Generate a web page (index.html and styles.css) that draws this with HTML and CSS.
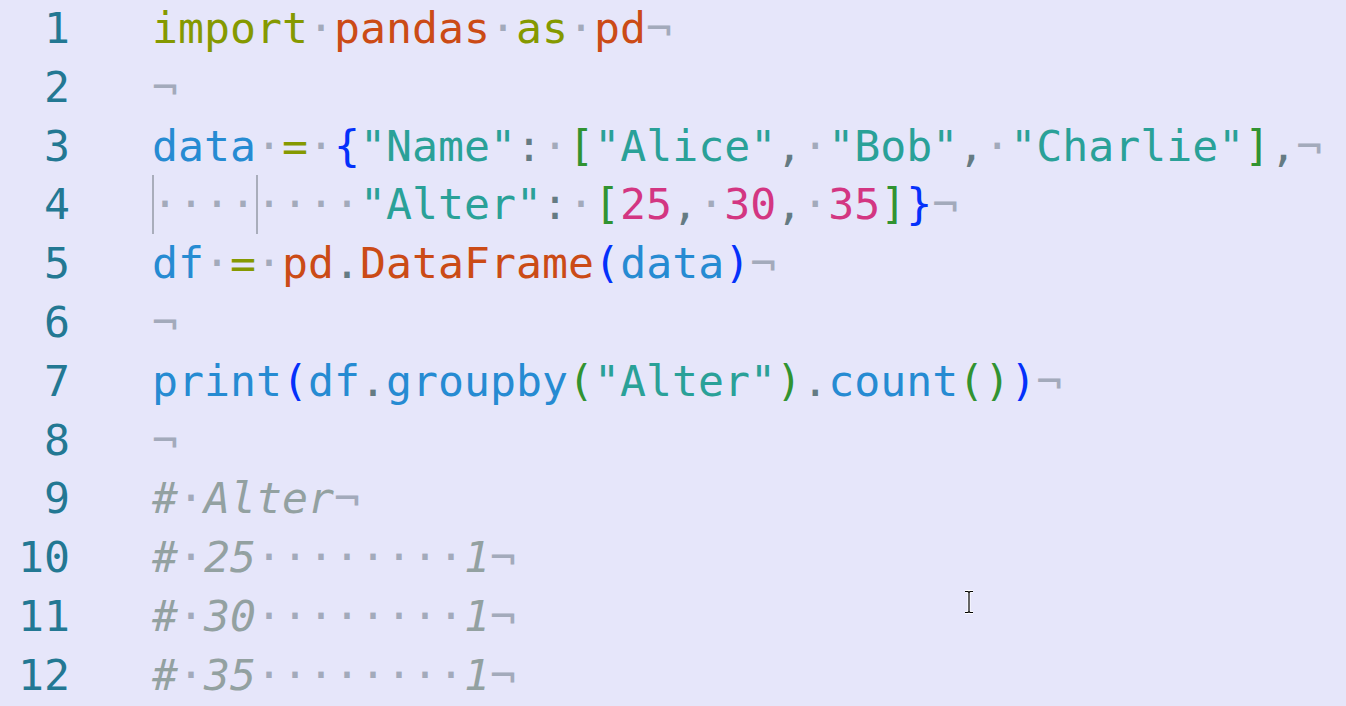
FILE: index.html
```html
<!DOCTYPE html>
<html>
<head>
<meta charset="utf-8">
<link rel="stylesheet" href="styles.css">
</head>
<body>
<div class="editor">
  <div class="row"><span class="ln">1</span><span class="code"><span class="kw">import</span><span class="ws">·</span><span class="mod">pandas</span><span class="ws">·</span><span class="kw">as</span><span class="ws">·</span><span class="mod">pd</span><span class="eol">¬</span></span></div>
  <div class="row"><span class="ln">2</span><span class="code"><span class="eol">¬</span></span></div>
  <div class="row"><span class="ln">3</span><span class="code"><span class="var">data</span><span class="ws">·</span><span class="kw">=</span><span class="ws">·</span><span class="b1">{</span><span class="str">"Name"</span><span class="pun">:</span><span class="ws">·</span><span class="b2">[</span><span class="str">"Alice"</span><span class="pun">,</span><span class="ws">·</span><span class="str">"Bob"</span><span class="pun">,</span><span class="ws">·</span><span class="str">"Charlie"</span><span class="b2">]</span><span class="pun">,</span><span class="eol">¬</span></span></div>
  <div class="row"><span class="ln">4</span><span class="code"><span class="ind ws">····</span><span class="ind ws">····</span><span class="str">"Alter"</span><span class="pun">:</span><span class="ws">·</span><span class="b2">[</span><span class="num">25</span><span class="pun">,</span><span class="ws">·</span><span class="num">30</span><span class="pun">,</span><span class="ws">·</span><span class="num">35</span><span class="b2">]</span><span class="b1">}</span><span class="eol">¬</span></span></div>
  <div class="row"><span class="ln">5</span><span class="code"><span class="var">df</span><span class="ws">·</span><span class="kw">=</span><span class="ws">·</span><span class="mod">pd</span><span class="pun">.</span><span class="mod">DataFrame</span><span class="b1">(</span><span class="var">data</span><span class="b1">)</span><span class="eol">¬</span></span></div>
  <div class="row"><span class="ln">6</span><span class="code"><span class="eol">¬</span></span></div>
  <div class="row"><span class="ln">7</span><span class="code"><span class="var">print</span><span class="b1">(</span><span class="var">df</span><span class="pun">.</span><span class="var">groupby</span><span class="b2">(</span><span class="str">"Alter"</span><span class="b2">)</span><span class="pun">.</span><span class="var">count</span><span class="b2">()</span><span class="b1">)</span><span class="eol">¬</span></span></div>
  <div class="row"><span class="ln">8</span><span class="code"><span class="eol">¬</span></span></div>
  <div class="row"><span class="ln">9</span><span class="code"><span class="cmt">#</span><span class="ws">·</span><span class="cmt">Alter</span><span class="eol">¬</span></span></div>
  <div class="row"><span class="ln">10</span><span class="code"><span class="cmt">#</span><span class="ws">·</span><span class="cmt">25</span><span class="ws">········</span><span class="cmt">1</span><span class="eol">¬</span></span></div>
  <div class="row"><span class="ln">11</span><span class="code"><span class="cmt">#</span><span class="ws">·</span><span class="cmt">30</span><span class="ws">········</span><span class="cmt">1</span><span class="eol">¬</span></span></div>
  <div class="row"><span class="ln">12</span><span class="code"><span class="cmt">#</span><span class="ws">·</span><span class="cmt">35</span><span class="ws">········</span><span class="cmt">1</span><span class="eol">¬</span></span></div>
</div>
<svg class="ibeam" width="10" height="24" viewBox="0 0 10 24"><path d="M1 1.5h3l1 1 1-1h3M5 2.5v19M1 22.5h3l1-1 1 1h3" fill="none" stroke="#fff" stroke-width="3"/><path d="M1 1.5h3l1 1 1-1h3M5 2.5v19M1 22.5h3l1-1 1 1h3" fill="none" stroke="#000" stroke-width="1.2"/></svg>
</body>
</html>
```
FILE: styles.css
```css
html, body {
  margin: 0;
  padding: 0;
  background: #e6e6fa;
  overflow: hidden;
}
.editor {
  font-family: "DejaVu Sans Mono", monospace;
  font-size: 43.2px;
  line-height: 58.8px;
  margin-top: -1px;
}
.row {
  display: flex;
  height: 58.8px;
  white-space: pre;
}
.ln {
  width: 70px;
  text-align: right;
  color: #237893;
  flex: none;
}
.code {
  margin-left: 82px;
  color: #586e75;
}
.kw { color: #859900; }
.mod { color: #cb4b16; }
.var { color: #268bd2; }
.str { color: #2aa198; }
.num { color: #d33682; }
.pun { color: #657b83; }
.b1 { color: #0431fa; }
.b2 { color: #319331; }
.cmt { color: #93a1a1; font-style: italic; }
.ws { color: #a3aabb; }
.eol { color: #a3aabb; }
.ind {
  display: inline-block;
  height: 58.8px;
  vertical-align: top;
  box-shadow: inset 2px 0 0 #a9adbb;
}
.ibeam {
  position: absolute;
  left: 964px;
  top: 590px;
}
```
